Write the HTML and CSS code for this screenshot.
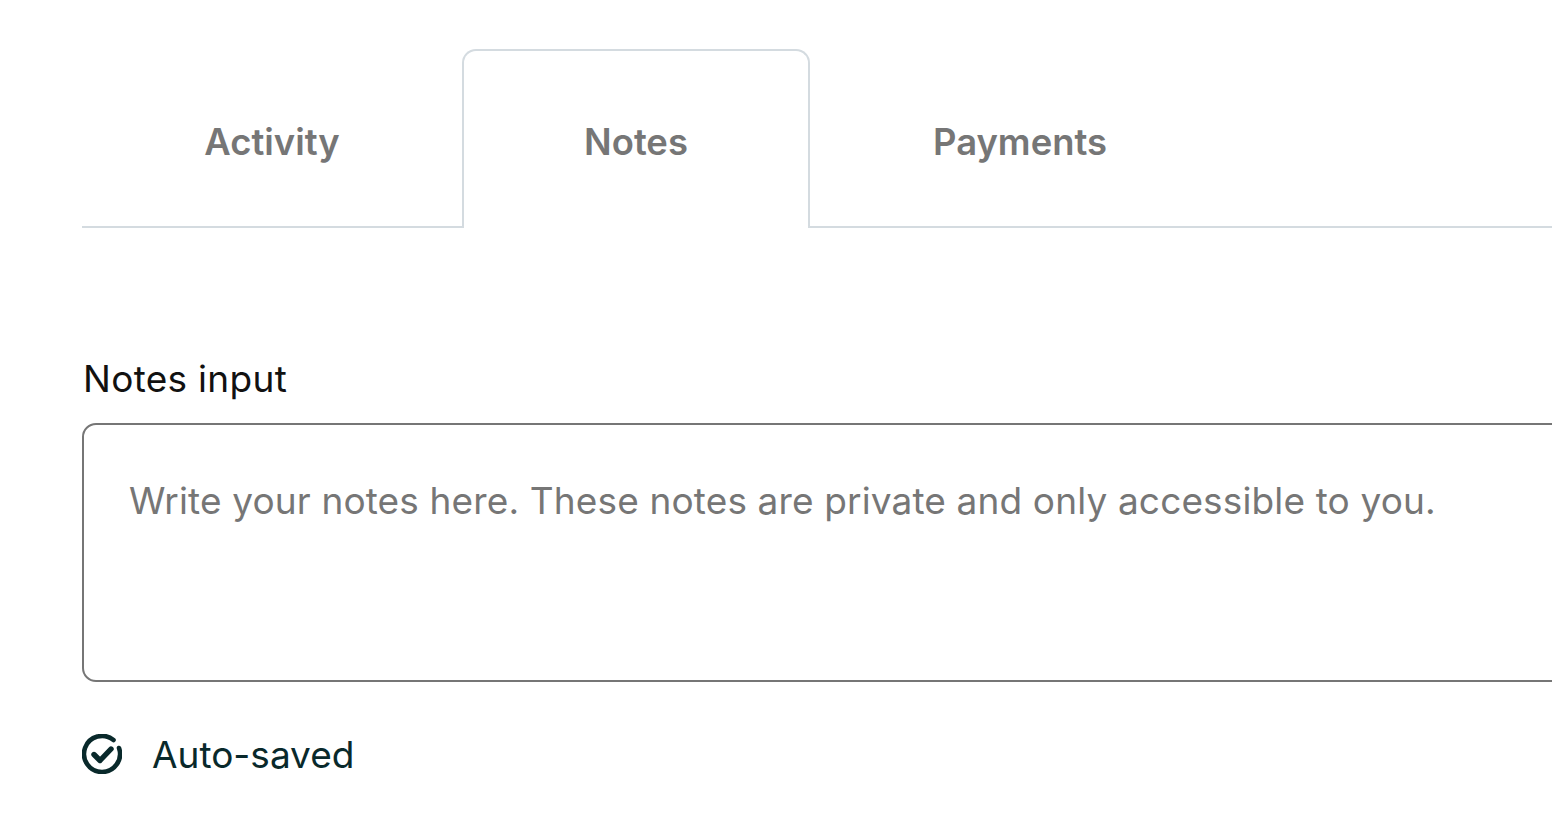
FILE: index.html
```html
<!DOCTYPE html>
<html lang="en">
<head>
<meta charset="utf-8">
<title>Notes</title>
<link rel="stylesheet" href="styles.css">
</head>
<body>
<main class="page">
  <nav class="tabs">
    <a class="tab tab-activity">Activity</a>
    <a class="tab tab-active">Notes</a>
    <a class="tab tab-payments">Payments</a>
    <span class="tab-rest"></span>
  </nav>
  <section class="notes">
    <label class="notes-label" for="notes">Notes input</label>
    <textarea class="notes-input" id="notes" placeholder="Write your notes here. These notes are private and only accessible to you."></textarea>
    <div class="status">
      <svg class="status-icon" viewBox="0 0 40 40" width="40" height="40" fill="none" stroke="#09292b" stroke-linecap="round" stroke-linejoin="round" aria-hidden="true">
        <path d="M31.5 6.1A18 18 0 1 0 37 14" stroke-width="4.6"/>
        <path d="M12 20.5l6 6 11-11.5" stroke-width="5.4"/>
      </svg>
      <span class="status-text">Auto-saved</span>
    </div>
  </section>
</main>
</body>
</html>
```
FILE: styles.css
```css
html, body {
  margin: 0;
  height: 100%;
  overflow: hidden;
  background: #fff;
}
body {
  font-family: "Inter", "Liberation Sans", sans-serif;
}
.page {
  padding: 49px 0 0 82px;
}
.tabs {
  display: flex;
  height: 179px;
}
.tab {
  box-sizing: border-box;
  display: flex;
  align-items: center;
  justify-content: center;
  height: 179px;
  border-bottom: 2px solid #d4dbe0;
  color: #767676;
  font-size: 36.4px;
  font-weight: 600;
}
.tab-activity { width: 380px; padding-top: 8px; }
.tab-payments { width: 420px; padding-top: 8px; }
.tab-active {
  width: 348px;
  padding-top: 4px;
  border: 2px solid #d4dbe0;
  border-bottom: 0;
  border-radius: 14px 14px 0 0;
}
.tab-rest {
  flex: 1;
  border-bottom: 2px solid #d4dbe0;
}
.notes {
  display: flex;
  flex-direction: column;
  align-items: flex-start;
  padding-top: 128px;
}
.notes-label {
  height: 46px;
  padding-left: 1px;
  line-height: 46px;
  font-size: 37px;
  letter-spacing: 0.3px;
  color: #111;
}
.notes-input {
  box-sizing: border-box;
  display: block;
  width: 1600px;
  height: 259px;
  margin-top: 21px;
  padding: 51px 45px 0;
  border: 2px solid #767676;
  border-radius: 14px;
  outline: 0;
  resize: none;
  font: 37px/50px "Inter", "Liberation Sans", sans-serif;
  letter-spacing: 0.14px;
}
.notes-input::placeholder {
  color: #767676;
  opacity: 1;
}
.status {
  display: flex;
  align-items: flex-start;
  gap: 30px;
  margin-top: 52px;
  color: #09292b;
}
.status-icon {
  display: block;
}
.status-text {
  font-size: 37px;
  line-height: 42px;
}
```
